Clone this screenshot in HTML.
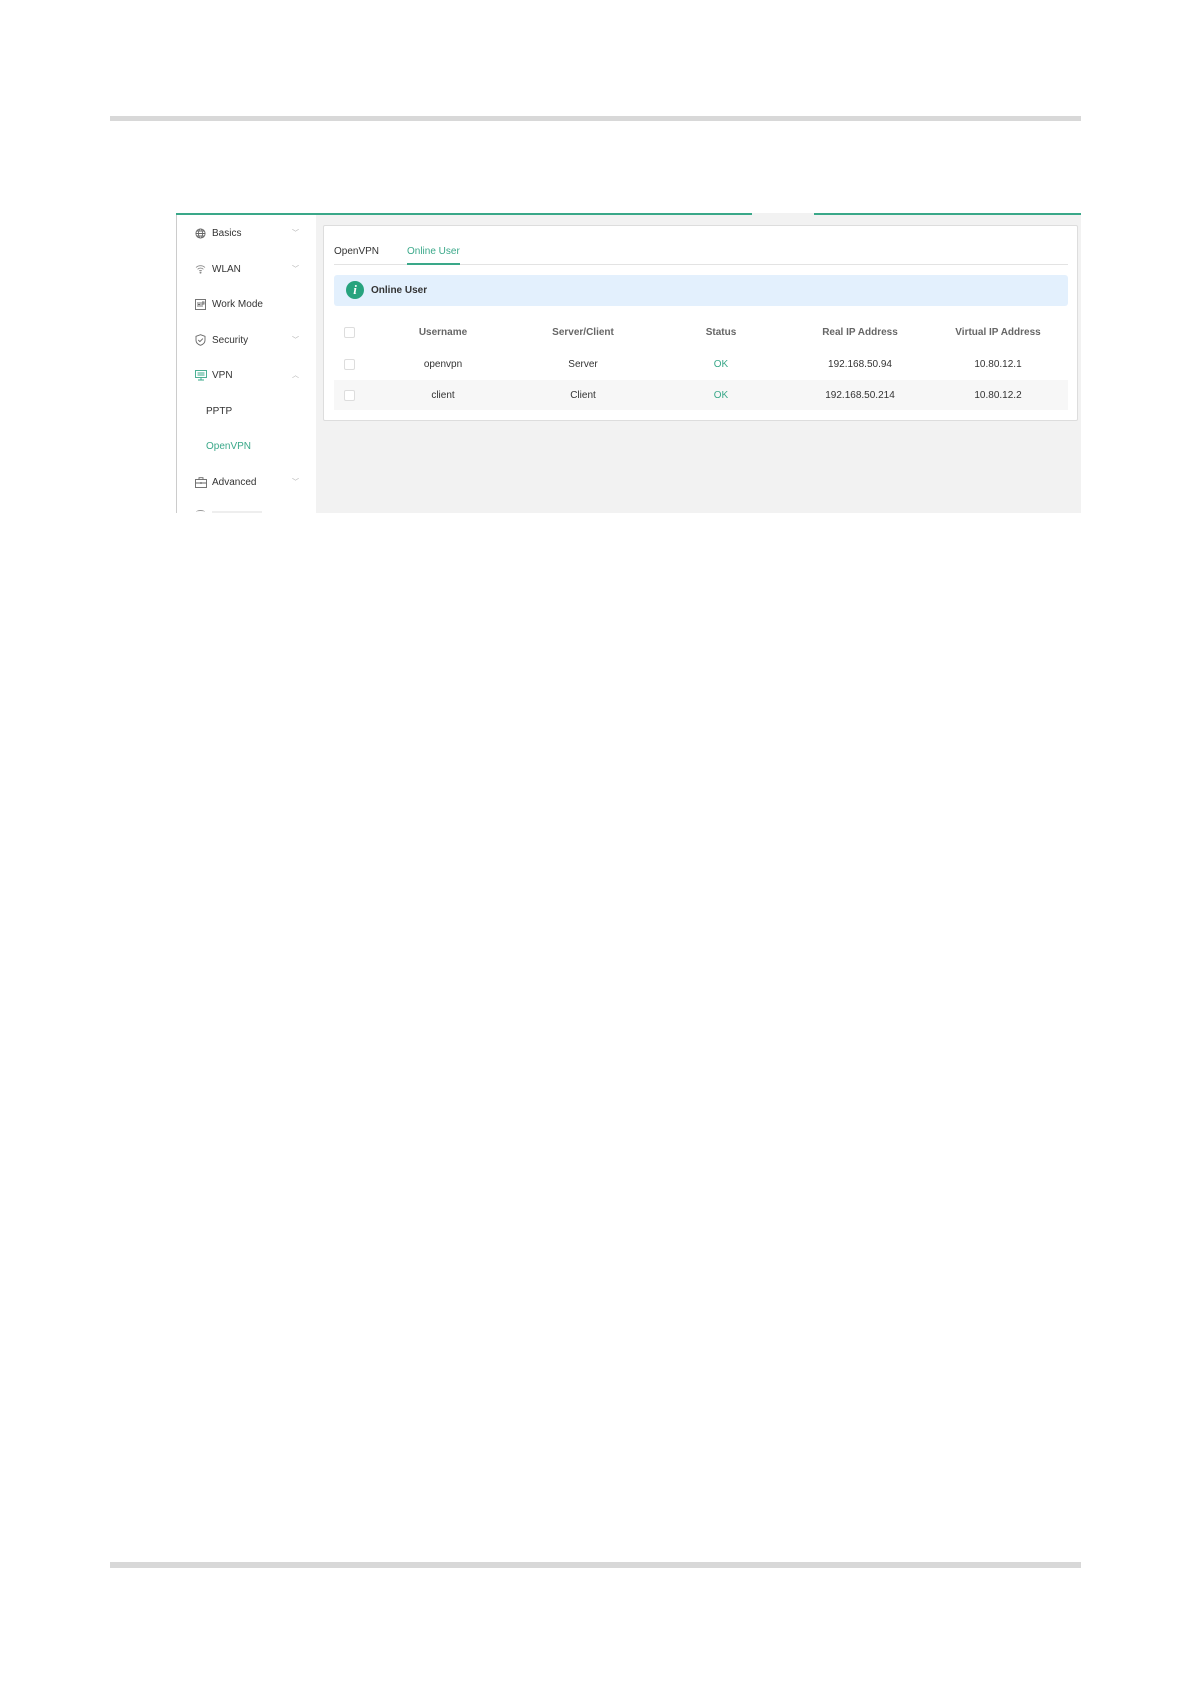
<!DOCTYPE html>
<html><head><meta charset="utf-8"><style>
body{margin:0;width:1191px;height:1684px;background:#fff;position:relative;font-family:"Liberation Sans",sans-serif;overflow:hidden}
.a{position:absolute}
.t{position:absolute;font-size:10px;color:#333;white-space:nowrap;margin-top:1px}
.c{position:absolute;font-size:10px;color:#555;white-space:nowrap;transform:translateX(-50%);margin-top:1px}
.h{font-weight:bold;color:#666}
.cb{position:absolute;width:9px;height:9px;border:1px solid #ddd;border-radius:2px;background:#fff}
.chev{position:absolute;left:292px;font-size:7px;color:#aaa;margin-top:2px}
svg{position:absolute}
</style></head><body>
<div class="a" style="left:110px;top:116px;width:971px;height:5px;background:#d8d8d8"></div>
<div class="a" style="left:110px;top:1562px;width:971px;height:6px;background:#d8d8d8"></div>

<div class="a" style="left:176px;top:213px;width:576px;height:2px;background:#3aa889"></div>
<div class="a" style="left:752px;top:213px;width:62px;height:2px;background:#f2f2f2"></div>
<div class="a" style="left:814px;top:213px;width:267px;height:2px;background:#3aa889"></div>
<div class="a" style="left:176px;top:215px;width:1px;height:298px;background:#ccc"></div>
<div class="a" style="left:316px;top:215px;width:765px;height:298px;background:#f2f2f2"></div>

<svg style="left:195px;top:228px" width="11" height="11" viewBox="0 0 11 11" fill="none" stroke="#666" stroke-width="0.9"><circle cx="5.5" cy="5.5" r="4.6"/><ellipse cx="5.5" cy="5.5" rx="2" ry="4.6"/><path d="M1 5.5h9M1.7 3h7.6M1.7 8h7.6"/></svg>
<div class="t" style="left:212px;top:227px">Basics</div><div class="chev" style="top:226px">﹀</div>
<svg style="left:195px;top:264px" width="11" height="10" viewBox="0 0 11 10" fill="none" stroke="#888" stroke-width="0.8"><path d="M1 3.5a6.5 6.5 0 0 1 9 0M2.6 5.3a4 4 0 0 1 5.8 0M4.2 7a1.8 1.8 0 0 1 2.6 0"/><circle cx="5.5" cy="8.6" r=".6" fill="#888"/></svg>
<div class="t" style="left:212px;top:263px">WLAN</div><div class="chev" style="top:262px">﹀</div>
<svg style="left:195px;top:299px" width="11" height="11" viewBox="0 0 11 11" fill="none" stroke="#666" stroke-width="0.9"><rect x=".5" y=".5" width="10" height="10"/><path d="M3 3v5M3 5.5h2M5 3v5M7 3v5M7 3h2v2H7"/></svg>
<div class="t" style="left:212px;top:298px">Work Mode</div>
<svg style="left:195px;top:334px" width="11" height="12" viewBox="0 0 11 12" fill="none" stroke="#666" stroke-width="0.9"><path d="M5.5 .7L10 2.3v4c0 2.5-2 4.2-4.5 5-2.5-.8-4.5-2.5-4.5-5v-4z"/><path d="M3.3 6l1.6 1.6 3-3"/></svg>
<div class="t" style="left:212px;top:334px">Security</div><div class="chev" style="top:333px">﹀</div>
<svg style="left:195px;top:370px" width="12" height="11" viewBox="0 0 12 11" fill="none" stroke="#3aa889" stroke-width="0.9"><rect x=".5" y=".5" width="11" height="7"/><path d="M2.5 3h7M2.5 5h7M6 7.5v2M3 10h6"/></svg>
<div class="t" style="left:212px;top:369px">VPN</div><div class="chev" style="top:368px">︿</div>
<div class="t" style="left:206px;top:405px">PPTP</div>
<div class="t" style="left:206px;top:440px;color:#3aa889">OpenVPN</div>
<svg style="left:195px;top:477px" width="12" height="11" viewBox="0 0 12 11" fill="none" stroke="#666" stroke-width="0.9"><rect x=".5" y="2.5" width="11" height="8"/><path d="M4 2.5V.7h4v1.8M.5 6h11M6 5v2"/></svg>
<div class="t" style="left:212px;top:476px">Advanced</div><div class="chev" style="top:475px">﹀</div>
<div class="a" style="left:196px;top:510px;width:9px;height:3px;border-top:1px solid #999;border-radius:50% 50% 0 0"></div>
<div class="a" style="left:212px;top:511px;width:50px;height:2px;background:#eee"></div>

<div class="a" style="left:323px;top:225px;width:753px;height:194px;background:#fff;border:1px solid #ddd;border-radius:2px"></div>
<div class="t" style="left:334px;top:245px">OpenVPN</div>
<div class="t" style="left:407px;top:245px;color:#3aa889">Online User</div>
<div class="a" style="left:334px;top:264px;width:734px;height:1px;background:#e3e3e3"></div>
<div class="a" style="left:407px;top:263px;width:53px;height:2px;background:#3aa889"></div>
<div class="a" style="left:334px;top:275px;width:734px;height:31px;background:#e3f0fd;border-radius:3px"></div>
<div class="a" style="left:346px;top:281px;width:18px;height:18px;border-radius:50%;background:#27a37e;color:#fff;font:italic bold 13px 'Liberation Serif',serif;text-align:center;line-height:18px">i</div>
<div class="t" style="left:371px;top:284px;font-weight:bold">Online User</div>

<div class="a" style="left:334px;top:380px;width:734px;height:30px;background:#f7f7f7"></div>
<div class="cb" style="left:344px;top:327px"></div>
<div class="cb" style="left:344px;top:359px"></div>
<div class="cb" style="left:344px;top:390px"></div>
<div class="c h" style="left:443px;top:326px">Username</div>
<div class="c h" style="left:583px;top:326px">Server/Client</div>
<div class="c h" style="left:721px;top:326px">Status</div>
<div class="c h" style="left:860px;top:326px">Real IP Address</div>
<div class="c h" style="left:998px;top:326px">Virtual IP Address</div>
<div class="c" style="left:443px;top:358px;color:#333">openvpn</div>
<div class="c" style="left:583px;top:358px;color:#333">Server</div>
<div class="c" style="left:721px;top:358px;color:#3aa889">OK</div>
<div class="c" style="left:860px;top:358px;color:#333">192.168.50.94</div>
<div class="c" style="left:998px;top:358px;color:#333">10.80.12.1</div>
<div class="c" style="left:443px;top:389px;color:#333">client</div>
<div class="c" style="left:583px;top:389px;color:#333">Client</div>
<div class="c" style="left:721px;top:389px;color:#3aa889">OK</div>
<div class="c" style="left:860px;top:389px;color:#333">192.168.50.214</div>
<div class="c" style="left:998px;top:389px;color:#333">10.80.12.2</div>
</body></html>
